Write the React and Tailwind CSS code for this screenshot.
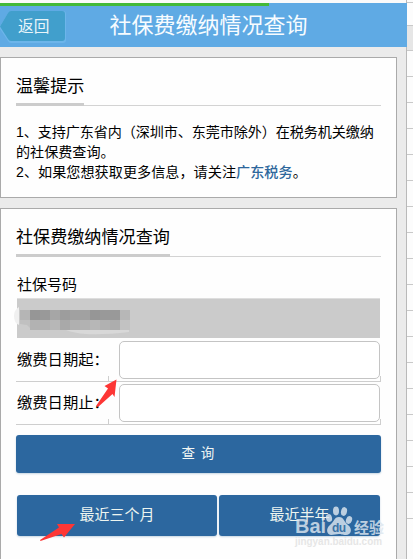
import clsx from 'clsx';

const SHEET_ROWS = Array.from({ length: 19 }, (_, i) => i);

const MASK_TOP = ['#b5b5b5', '#969696', '#999999', '#a6a6a6', '#9d9d9d', '#a1a1a1', '#a1a1a1', '#969696', '#999999', '#999999', '#b7b7b7'];
const MASK_BOTTOM = ['#c0c0c0', '#b2b2b2', '#b2b2b2', '#b7b7b7', '#a9a9a9', '#b0b0b0', '#b2b2b2', '#b7b7b7', '#b1b1b1', '#adadad', '#c2c2c2'];

export default function App() {
  return (
    <div className="relative flex h-[559px] w-[413px] overflow-hidden bg-[#fcfcfc] font-['Liberation_Sans','Noto_Sans_CJK_SC',sans-serif] text-black">
      <main className="flex h-full w-[407px] shrink-0 flex-col border-r border-[#b9b9b9] bg-[#ebebeb]">
        <div className="h-[3px] shrink-0 bg-[#fafafa]" />
        <Header />

        <section className="mt-[10px] h-[141px] w-[397px] shrink-0 border border-[#aaaaaa] bg-[#fefefe] px-[15px] pt-[15px]">
          <SectionTitle>温馨提示</SectionTitle>
          <div className="mt-[16px] whitespace-nowrap text-[14.1px] leading-[20px]">
            <p className="tracking-[-0.09px]">1、支持广东省内（深圳市、东莞市除外）在税务机关缴纳</p>
            <p>的社保费查询。</p>
            <p className="tracking-[0.05px]">
              2、如果您想获取更多信息，请关注<a className="font-medium text-[#2d679c]">广东税务</a>。
            </p>
          </div>
        </section>

        <section className="mt-[10px] h-[360px] w-[397px] shrink-0 border border-[#aaaaaa] bg-[#fefefe] px-[15px] pt-[15px]">
          <SectionTitle>社保费缴纳情况查询</SectionTitle>
          <label className="mt-[17px] block h-[24px] pl-px text-[15px] leading-[21px]">社保号码</label>
          <div className="ml-px h-[40px] w-[363px] border-t border-[#dedede] bg-[#cbcbcb]">
            <MaskedNumber />
          </div>
          <DateRow label="缴费日期起：" className="h-[44px] pt-[3px]" />
          <DateRow label="缴费日期止：" className="h-[43px] pt-[2px]" />
          <button className="mt-[10px] block h-[38px] w-[365px] rounded-[3px] bg-[#2c679f] text-[13.5px] tracking-[1px] text-[#f1f6f4] shadow-[0_1px_2px_#c5d5e2]">
            查 询
          </button>
          <div className="ml-px mt-[22px] flex gap-[2px] text-[15px] text-[#edf5f0]">
            <button className="h-[41px] w-[200px] rounded-[3px] bg-[#2c679f] shadow-[0_1px_2px_#c5d5e2]">最近三个月</button>
            <button className="h-[41px] w-[161px] rounded-[3px] bg-[#2c679f] shadow-[0_1px_2px_#c5d5e2]">最近半年</button>
          </div>
        </section>
      </main>

      <aside className="w-[6px] shrink-0 pt-[2px]">
        <div className="h-[23px] border-t border-[#c9c9c9]" />
        <div className="h-[25px] border-t border-[#c9c9c9] bg-[#e6e6e6]" />
        {SHEET_ROWS.map((i) => (
          <div key={i} className="h-[26px] border-t border-[#c9c9c9]" />
        ))}
      </aside>

      <Arrow className="absolute left-[95px] top-[379px]" points="21.5,0.5 9.5,7 13,9.5 1,27 3,28 17.5,15 19.5,18" width="24" height="30" />
      <Arrow className="absolute left-[39px] top-[522px]" points="36,2 18,2 20,5.5 1,18 1.5,19 22.5,12 25,15.5" width="38" height="21" />
      <Watermark />
    </div>
  );
}

function Header() {
  return (
    <header className="h-[44px] w-[407px] shrink-0 bg-[#5faae4]">
      <div className="h-[3px] w-[269px] bg-[#43b939]" />
      <div className="flex h-[41px] items-start">
        <div className="grid h-[41px] w-[109.5px] shrink-0 items-start pt-[4px]">
          <svg className="col-start-1 row-start-1" width="67" height="35" viewBox="0 0 67 35">
            <path d="M0 16 8 3Q9 1 11 1H63Q66 1 66 4V30Q66 33 63 33H11Q9 33 8 31L0 19Z" fill="#6cb5ea" />
            <path d="M0 16.5 8 3Q9 1 11 1H62Q65 1 65 4V28Q65 31 62 31H11Q9 31 8 29Z" fill="#419fcc" />
          </svg>
          <span className="col-start-1 row-start-1 pl-[18px] text-[15.7px] leading-[33px] text-[#e9f5fa]">返回</span>
        </div>
        <h1 className="whitespace-nowrap text-[22px] leading-[39px] text-[#f7fcff]">社保费缴纳情况查询</h1>
      </div>
    </header>
  );
}

function SectionTitle({ children }) {
  return (
    <div className="flex h-[33px] border-b border-[#d3d3d3]">
      <h2 className="-mb-px h-[33px] border-b-[3px] border-[#cccccc] text-[17.1px] leading-[28px]">{children}</h2>
    </div>
  );
}

function DateRow({ label, className }) {
  return (
    <div className={clsx('flex w-[365px] border-b border-[#cecece]', className)}>
      <span className="w-[92px] shrink-0 whitespace-nowrap pl-px text-[15.3px] leading-[37px]">{label}</span>
      <span className="mr-[10px] h-[5px] self-end border-l border-[#cecece]" />
      <input readOnly className="h-[38px] w-[261px] shrink-0 rounded-[5px] border border-[#c4c4c4] bg-white outline-none" />
      <span className="h-[5px] self-end border-l border-[#cecece]" />
    </div>
  );
}

function MaskedNumber() {
  return (
    <svg className="-ml-[3px]" width="120" height="38" viewBox="0 0 120 38">
      <path d="M5 8Q0 11 0 17Q0 24 5 26Z" fill="#f0f0f0" />
      <path d="M52 31H115V33Q90 36 72 35Q60 34 52 31Z" fill="#d8d8d8" />
      {MASK_TOP.map((fill, i) => (
        <rect key={i} x={6 + i * 10} y="11" width="10" height="10" fill={fill} />
      ))}
      {MASK_BOTTOM.map((fill, i) =>
        i === 0 ? (
          <path key={i} d="M6 21H16V29L13 26L6 25Z" fill={fill} />
        ) : (
          <rect key={i} x={6 + i * 10} y="21" width="10" height="10" fill={fill} />
        )
      )}
    </svg>
  );
}

function Arrow({ points, ...props }) {
  return (
    <svg {...props}>
      <polygon points={points} fill="#fd3635" />
    </svg>
  );
}

function Watermark() {
  return (
    <svg className="absolute left-[292px] top-[502px]" width="96" height="46" viewBox="0 0 96 46">
      <g fill="#dce6ef" fillOpacity="0.82">
        <text x="3" y="31" fontFamily="Liberation Sans" fontSize="20" fontWeight="bold" textLength="31" lengthAdjust="spacingAndGlyphs">Bai</text>
        <ellipse cx="37" cy="16" rx="3" ry="4" transform="rotate(-15 37 16)" />
        <ellipse cx="44" cy="9" rx="3" ry="4.4" />
        <ellipse cx="52" cy="9.5" rx="3" ry="4.4" transform="rotate(12 52 9.5)" />
        <ellipse cx="57" cy="18" rx="3" ry="4" transform="rotate(20 57 18)" />
        <path d="M47 15C52 15 52 20 56 23C61 27 59 33 54 33C50 33 49 32 47 32C44 32 42 33 39 33C34 32 34 26 38 23C42 20 42 15 47 15Z" />
        <text x="62" y="31" fontFamily="Noto Sans CJK SC" fontSize="15" fontWeight="bold">经验</text>
      </g>
      <text x="40" y="30" fill="#3d74a6" fontFamily="Liberation Sans" fontSize="12" fontWeight="bold" textLength="14">du</text>
      <text x="3" y="43" fill="#e6e6e6" fontFamily="Liberation Sans" fontSize="10.5" fontWeight="bold" textLength="87" lengthAdjust="spacingAndGlyphs">jingyan.baidu.com</text>
    </svg>
  );
}
